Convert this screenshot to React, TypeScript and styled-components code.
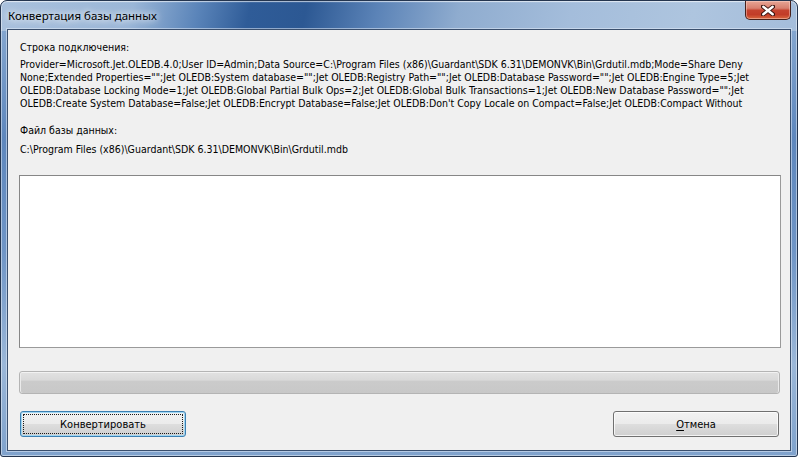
import React from "react";
import styled, { createGlobalStyle } from "styled-components";

const Global = createGlobalStyle`
  html, body { margin: 0; padding: 0; background: #ffffff; }
  body { width: 798px; height: 457px; overflow: hidden; }
  * { box-sizing: border-box; }
`;

const Window = styled.div`
  width: 798px;
  height: 457px;
  display: flex;
  flex-direction: column;
  padding: 0 6px 5px 6px;
  border: 1px solid #24354f;
  border-radius: 7px 7px 3px 3px;
  background-color: #7c9fcb;
  background-image:
    linear-gradient(180deg, rgba(255, 255, 255, 0.35) 0px, rgba(255, 255, 255, 0) 2px),
    linear-gradient(
      102deg,
      #a9c1dd 0px,
      #9ab6d7 130px,
      #5a84b9 195px,
      #2f5c98 245px,
      #2c5893 300px,
      #5b83b7 370px,
      #8faccf 450px,
      #a4bddb 560px,
      #aec5df 680px,
      #a3bcda 798px
    ),
    linear-gradient(
      180deg,
      #8eaed4 0%,
      #5e87bd 30%,
      #6f95c6 55%,
      #9bb7d8 80%,
      #7fa2cc 100%
    );
  background-size: 100% 30px, 100% 30px, 100% 100%;
  background-repeat: no-repeat;
  box-shadow: inset 0 0 0 1px rgba(255, 255, 255, 0.45);
  overflow: hidden;
`;

const TitleBar = styled.div`
  height: 28px;
  flex: 0 0 28px;
  display: flex;
  align-items: flex-start;
  justify-content: space-between;
  padding-left: 1px;
`;

const TitleText = styled.div`
  align-self: center;
  margin-top: 1px;
  font-family: "Noto Sans", "Open Sans", sans-serif;
  font-size: 11.5px;
  color: #000;
  text-shadow: 0 0 6px rgba(255, 255, 255, 0.95), 0 0 10px rgba(255, 255, 255, 0.8);
`;

const CloseButton = styled.div`
  width: 46px;
  height: 19px;
  display: flex;
  align-items: center;
  justify-content: center;
  border: 1px solid #47211b;
  border-top: none;
  border-radius: 0 0 5px 5px;
  background: linear-gradient(
    180deg,
    #e7a595 0%,
    #d8806f 40%,
    #c5432f 52%,
    #c23c28 75%,
    #d9683f 100%
  );
  box-shadow: inset 0 0 0 1px rgba(255, 220, 210, 0.45);
`;

const Client = styled.div`
  flex: 1 1 auto;
  display: flex;
  flex-direction: column;
  background: #f0f0f0;
  border: 1px solid #3a4f6d;
  padding: 11px 9px 13px 11px;
  box-shadow: 0 0 0 1px rgba(225, 235, 248, 0.55);
  font-family: Tahoma, "DejaVu Sans Condensed", "DejaVu Sans", sans-serif;
  font-size: 10.5px;
  color: #000;
`;

const Label = styled.div<{ $gap?: number }>`
  height: 13px;
  line-height: 13px;
  padding-left: 1px;
  margin-top: ${(p) => p.$gap ?? 0}px;
  white-space: nowrap;
`;

const ConnText = styled.div`
  margin-top: 4px;
  height: 54px;
  overflow: hidden;
  padding-left: 1px;
`;

const ConnLine = styled.div`
  height: 13px;
  line-height: 13px;
  white-space: nowrap;
`;

const LogBox = styled.div`
  margin-top: 19px;
  height: 173px;
  background: #ffffff;
  border: 1px solid #868686;
  border-right-color: #9a9a9a;
  border-bottom-color: #9a9a9a;
`;

const Progress = styled.div`
  margin-top: 23px;
  margin-right: 1px;
  height: 23px;
  border: 1px solid #b4b4b4;
  border-radius: 3px;
  background: linear-gradient(180deg, #e2e2e2 0%, #d9d9d9 38%, #cbcbcb 45%, #c8c8c8 100%);
  box-shadow: inset 0 1px 0 #f2f2f2, inset 1px 0 0 #ebebeb, inset -1px 0 0 #ebebeb;
`;

const ButtonRow = styled.div`
  margin: 17px 2px 0 1px;
  display: flex;
  justify-content: space-between;
`;

const Button = styled.div<{ $default?: boolean }>`
  position: relative;
  width: 166px;
  height: 26px;
  display: flex;
  align-items: center;
  justify-content: center;
  border: 1px solid ${(p) => (p.$default ? "#3c7fb1" : "#707070")};
  border-radius: 3px;
  background: linear-gradient(180deg, #f2f2f2 0%, #ebebeb 48%, #dddddd 52%, #cfcfcf 100%);
  box-shadow: inset 0 0 0 1px ${(p) => (p.$default ? "#9fd6f3" : "rgba(255,255,255,0.75)")};
  font-size: 11px;
  color: #000;
  padding-top: 1px;

  ${(p) =>
    p.$default
      ? `&::after {
    content: "";
    position: absolute;
    inset: 2px;
    border: 1px dotted #1a1a1a;
    border-radius: 1px;
  }`
      : ""}

  u {
    text-decoration: underline;
    text-underline-offset: 2px;
  }
`;

const lines = [
  "Provider=Microsoft.Jet.OLEDB.4.0;User ID=Admin;Data Source=C:\\Program Files (x86)\\Guardant\\SDK 6.31\\DEMONVK\\Bin\\Grdutil.mdb;Mode=Share Deny",
  'None;Extended Properties="";Jet OLEDB:System database="";Jet OLEDB:Registry Path="";Jet OLEDB:Database Password="";Jet OLEDB:Engine Type=5;Jet',
  'OLEDB:Database Locking Mode=1;Jet OLEDB:Global Partial Bulk Ops=2;Jet OLEDB:Global Bulk Transactions=1;Jet OLEDB:New Database Password="";Jet',
  "OLEDB:Create System Database=False;Jet OLEDB:Encrypt Database=False;Jet OLEDB:Don't Copy Locale on Compact=False;Jet OLEDB:Compact Without",
  "Replica Repair=False;Jet OLEDB:SFP=False",
];

const CloseGlyph = () => (
  <svg width="14" height="11" viewBox="0 0 14 11">
    <path
      d="M2 1.5 L12 9.5 M12 1.5 L2 9.5"
      stroke="#3b1410"
      strokeWidth="4.2"
      strokeLinecap="round"
      fill="none"
    />
    <path
      d="M2.3 1.8 L11.7 9.2 M11.7 1.8 L2.3 9.2"
      stroke="#ffffff"
      strokeWidth="2.4"
      strokeLinecap="round"
      fill="none"
    />
  </svg>
);

export default function App() {
  return (
    <>
      <Global />
      <Window>
        <TitleBar>
          <TitleText>Конвертация базы данных</TitleText>
          <CloseButton>
            <CloseGlyph />
          </CloseButton>
        </TitleBar>
        <Client>
          <Label>Строка подключения:</Label>
          <ConnText>
            {lines.map((l, i) => (
              <ConnLine key={i}>{l}</ConnLine>
            ))}
          </ConnText>
          <Label $gap={12}>Файл базы данных:</Label>
          <Label $gap={6}>C:\Program Files (x86)\Guardant\SDK 6.31\DEMONVK\Bin\Grdutil.mdb</Label>
          <LogBox />
          <Progress />
          <ButtonRow>
            <Button $default>Конвертировать</Button>
            <Button>
              <span>
                <u>О</u>тмена
              </span>
            </Button>
          </ButtonRow>
        </Client>
      </Window>
    </>
  );
}
